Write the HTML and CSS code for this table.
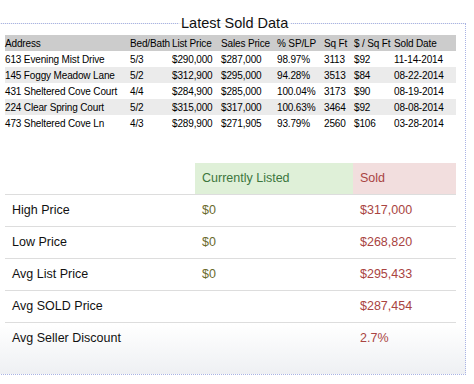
FILE: index.html
```html
<!DOCTYPE html>
<html>
<head>
<meta charset="utf-8">
<link rel="stylesheet" href="styles.css">
</head>
<body>
<fieldset class="box">
  <legend class="box-title">Latest Sold Data</legend>
  <table class="sold">
    <colgroup>
      <col class="c-addr"><col class="c-bb"><col class="c-lp"><col class="c-sp"><col class="c-pct"><col class="c-sq"><col class="c-psf"><col class="c-date">
    </colgroup>
    <thead>
      <tr><th>Address</th><th>Bed/Bath</th><th>List Price</th><th>Sales Price</th><th>% SP/LP</th><th>Sq Ft</th><th>$ / Sq Ft</th><th>Sold Date</th></tr>
    </thead>
    <tbody>
      <tr><td>613 Evening Mist Drive</td><td>5/3</td><td>$290,000</td><td>$287,000</td><td>98.97%</td><td>3113</td><td>$92</td><td>11-14-2014</td></tr>
      <tr><td>145 Foggy Meadow Lane</td><td>5/2</td><td>$312,900</td><td>$295,000</td><td>94.28%</td><td>3513</td><td>$84</td><td>08-22-2014</td></tr>
      <tr><td>431 Sheltered Cove Court</td><td>4/4</td><td>$284,900</td><td>$285,000</td><td>100.04%</td><td>3173</td><td>$90</td><td>08-19-2014</td></tr>
      <tr><td>224 Clear Spring Court</td><td>5/2</td><td>$315,000</td><td>$317,000</td><td>100.63%</td><td>3464</td><td>$92</td><td>08-08-2014</td></tr>
      <tr><td>473 Sheltered Cove Ln</td><td>4/3</td><td>$289,900</td><td>$271,905</td><td>93.79%</td><td>2560</td><td>$106</td><td>03-28-2014</td></tr>
    </tbody>
  </table>

  <table class="summary">
    <colgroup><col class="s-label"><col class="s-listed"><col class="s-sold"></colgroup>
    <thead>
      <tr><th></th><th class="listed">Currently Listed</th><th class="soldh">Sold</th></tr>
    </thead>
    <tbody>
      <tr><td class="lbl">High Price</td><td class="v-listed">$0</td><td class="v-sold">$317,000</td></tr>
      <tr><td class="lbl">Low Price</td><td class="v-listed">$0</td><td class="v-sold">$268,820</td></tr>
      <tr><td class="lbl">Avg List Price</td><td class="v-listed">$0</td><td class="v-sold">$295,433</td></tr>
      <tr><td class="lbl">Avg SOLD Price</td><td class="v-listed"></td><td class="v-sold">$287,454</td></tr>
      <tr><td class="lbl">Avg Seller Discount</td><td class="v-listed"></td><td class="v-sold">2.7%</td></tr>
    </tbody>
  </table>
</fieldset>
</body>
</html>
```

FILE: styles.css
```css
html, body {
  margin: 0;
  padding: 0;
  background: #fff;
}
body {
  font-family: "Liberation Sans", Arial, sans-serif;
  color: #000;
}
.box {
  box-sizing: border-box;
  width: 468px;
  margin: 15px 0 0 -2px;
  padding: 0 9px 20px 6px;
  border: 1px dotted #a9b3e4;
  min-width: 0;
  background: linear-gradient(to bottom, #fff 0, #fff 300px, #eef0f3 100%);
}
.box-title {
  margin: 0 0 0 174px;
  padding: 0 2px;
  font-size: 14.5px;
  color: #111;
  line-height: 17px;
}
.sold {
  width: 100%;
  table-layout: fixed;
  border-collapse: collapse;
  font-size: 10px;
  letter-spacing: -0.15px;
  margin-top: 3px;
}
.c-addr { width: 125px; }
.c-bb { width: 42px; }
.c-lp { width: 49px; }
.c-sp { width: 56px; }
.c-pct { width: 47px; }
.c-sq { width: 30px; }
.c-psf { width: 40px; }
.c-date { width: 62px; }
.sold th, .sold td {
  padding: 0;
  height: 16px;
  text-align: left;
  font-weight: normal;
  white-space: nowrap;
  vertical-align: middle;
}
.sold thead tr { background: #cccccc; }
.sold tbody tr:nth-child(even) { background: #ebebeb; }

.summary {
  width: 100%;
  table-layout: fixed;
  border-collapse: collapse;
  margin-top: 32px;
  font-size: 12.5px;
}
.s-label { width: 190px; }
.s-listed { width: 158px; }
.s-sold { width: 103px; }
.summary th, .summary td {
  padding: 6px 7px;
  line-height: 19px;
  text-align: left;
  font-weight: normal;
  vertical-align: middle;
}
.summary th {
  height: 19px;
  border-bottom: 1px solid #dddddd;
}
.summary td {
  height: 19px;
  border-top: 1px solid #dddddd;
}
.summary thead + tbody tr:first-child td { border-top: none; }
.listed { background: #dff0d8; color: #3c763d; }
.soldh { background: #f2dede; color: #a94442; }
.lbl { color: #111; }
.v-listed { color: #6a6b2c; }
.v-sold { color: #a94442; }
```
